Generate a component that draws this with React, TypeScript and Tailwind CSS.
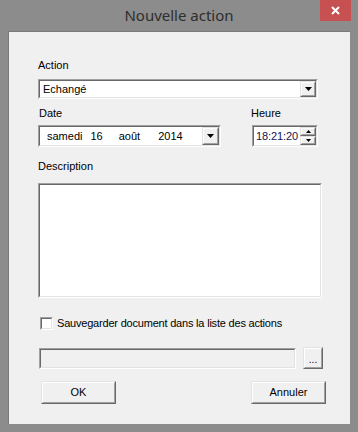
import React from 'react';

const FONT = { fontFamily: '"Liberation Sans", Arial, sans-serif' };

// sunken 3D field, classic Windows look
function Sunken({ className = '', inner = 'bg-white', children }: { className?: string; inner?: string; children?: React.ReactNode }) {
  return (
    <div className={`border border-t-[#a0a0a0] border-l-[#a0a0a0] border-b-[#ffffff] border-r-[#ffffff] ${className}`}>
      <div className={`h-full w-full border border-t-[#696969] border-l-[#696969] border-b-[#e3e3e3] border-r-[#e3e3e3] ${inner}`}>
        {children}
      </div>
    </div>
  );
}

function Raised({ className = '', children }: { className?: string; children?: React.ReactNode }) {
  return (
    <div className={`border border-t-[#e3e3e3] border-l-[#e3e3e3] border-b-[#696969] border-r-[#696969] ${className}`}>
      <div className="h-full w-full border border-t-[#ffffff] border-l-[#ffffff] border-b-[#a0a0a0] border-r-[#a0a0a0] bg-[#f0f0f0] flex items-center justify-center">
        {children}
      </div>
    </div>
  );
}

function Arrow({ up = false, w = 7 }: { up?: boolean; w?: number }) {
  const h = Math.ceil(w / 2);
  return (
    <svg width={w} height={h} viewBox={`0 0 ${w} ${h}`}>
      <polygon points={up ? `${w / 2},0 ${w},${h} 0,${h}` : `0,0 ${w},0 ${w / 2},${h}`} fill="#000" />
    </svg>
  );
}

export default function App() {
  return (
    <div className="w-[358px] h-[432px] bg-[#8c8c8c] flex flex-col relative" style={FONT}>
      {/* Title bar */}
      <div className="h-[31px] flex items-center justify-center">
        <span className="text-[15px] text-[#2e2e2e] leading-none pb-[1px]" style={{ fontFamily: '"Noto Sans", "Open Sans", sans-serif' }}>
          Nouvelle action
        </span>
      </div>
      <div className="absolute top-0 left-[320px] w-[31px] h-[21px] bg-[#c75050] flex items-center justify-center">
        <svg width="9" height="9" viewBox="0 0 9 9">
          <path d="M1 1 L8 8 M8 1 L1 8" stroke="#fff" strokeWidth="2" />
        </svg>
      </div>

      {/* Client area */}
      <div className="ml-[8px] w-[342px] h-[393px] bg-[#f0f0f0] border-t border-l border-[#7a7a7a] flex flex-col pl-[29px] text-[11px] leading-[13px] text-black">
        <div className="mt-[27px]">Action</div>
        <Sunken className="mt-[7px] w-[280px] h-[20px]">
          <div className="flex h-full items-center">
            <span className="flex-1 pl-[3px]">Echangé</span>
            <Raised className="w-[16px] h-[16px]">
              <Arrow />
            </Raised>
          </div>
        </Sunken>

        <div className="flex mt-[8px]">
          <div className="flex flex-col">
            <div className="ml-[1px]">Date</div>
            <Sunken className="mt-[5px] w-[183px] h-[22px]">
              <div className="flex h-full items-center">
                <span className="ml-[7px]">samedi</span>
                <span className="ml-[8px]">16</span>
                <span className="ml-[16px]">août</span>
                <span className="ml-[18px] flex-1">2014</span>
                <Raised className="w-[17px] h-[18px]">
                  <Arrow />
                </Raised>
              </div>
            </Sunken>
          </div>
          <div className="flex flex-col ml-[31px]">
            <div className="ml-[-1px]">Heure</div>
            <Sunken className="mt-[5px] w-[66px] h-[22px]">
              <div className="flex h-full items-center">
                <span className="flex-1 pl-[2px] text-[#141450] tracking-[-0.1px]">18:21:20</span>
                <div className="flex flex-col w-[16px] h-full">
                  <Raised className="flex-1">
                    <Arrow up w={5} />
                  </Raised>
                  <Raised className="flex-1">
                    <Arrow w={5} />
                  </Raised>
                </div>
              </div>
            </Sunken>
          </div>
        </div>

        <div className="mt-[13px]">Description</div>
        <Sunken className="mt-[10px] w-[284px] h-[115px]" />

        <div className="flex items-center mt-[19px] ml-[2px]">
          <Sunken className="w-[13px] h-[13px]" />
          <span className="ml-[4px] tracking-[-0.2px]">Sauvegarder document dans la liste des actions</span>
        </div>

        <div className="flex items-center mt-[17px] ml-[1px]">
          <Sunken className="w-[257px] h-[21px]" inner="bg-[#f0f0f0]" />
          <Raised className="ml-[7px] w-[20px] h-[22px]">
            <span className="text-[10px] leading-none pt-[3px]">...</span>
          </Raised>
        </div>

        <div className="flex mt-[12px] ml-[3px]">
          <Raised className="w-[75px] h-[23px]">
            <span>OK</span>
          </Raised>
          <Raised className="ml-[135px] w-[75px] h-[23px]">
            <span>Annuler</span>
          </Raised>
        </div>
      </div>
    </div>
  );
}
